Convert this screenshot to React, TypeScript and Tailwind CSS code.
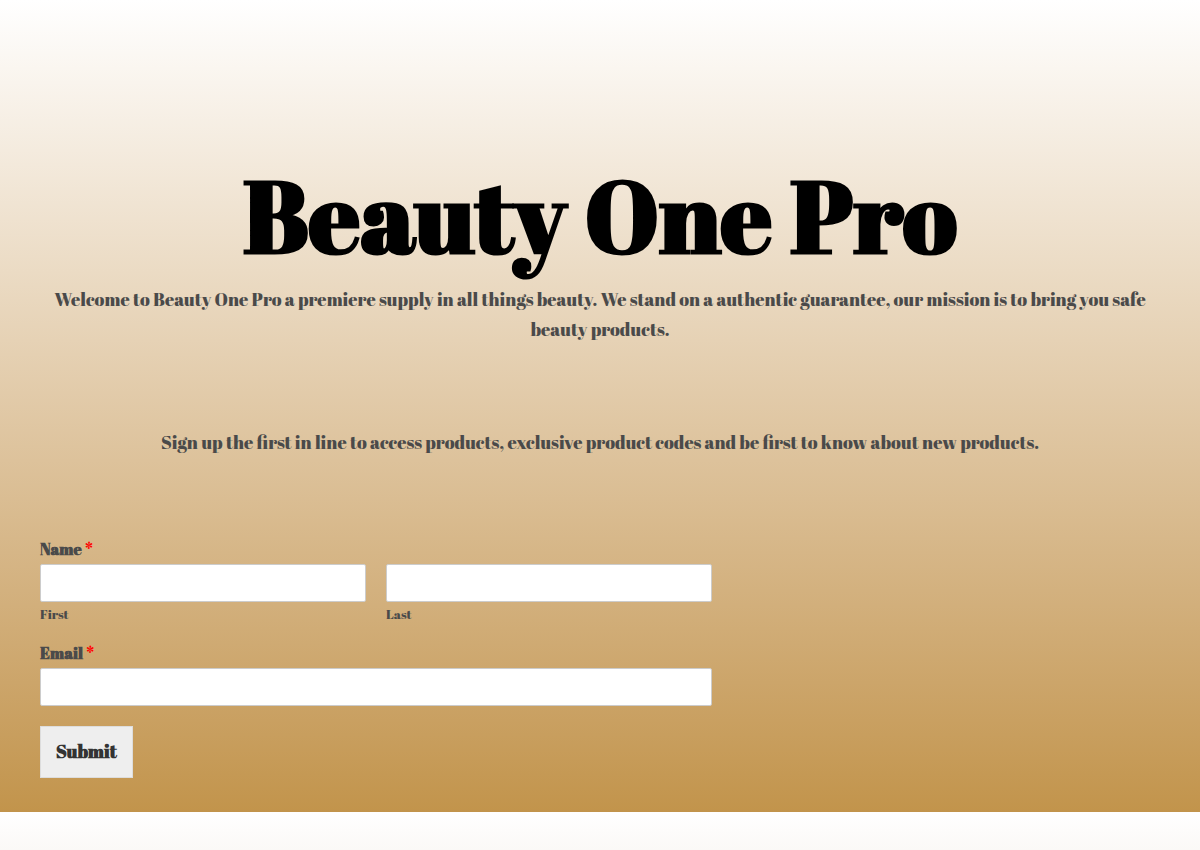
import { useId } from "react";
import type { ReactNode } from "react";

function FieldTitle({ children, htmlFor }: { children: ReactNode; htmlFor: string }) {
  return (
    <label htmlFor={htmlFor} className="mb-1 block text-base leading-[21px] font-bold">
      {children} <span className="font-normal text-[#ff0000]">*</span>
    </label>
  );
}

function TextBox({ id, type = "text" }: { id: string; type?: string }) {
  return (
    <input
      id={id}
      type={type}
      required
      className="block h-[38px] w-full rounded-xs border border-[#cccccc] bg-white px-2.5 text-base text-[#333333] shadow-none outline-none focus:border-[#999999]"
    />
  );
}

function SignUpForm() {
  const first = useId();
  const last = useId();
  const email = useId();
  return (
    <form className="mt-[82px] w-3/5 max-w-full" onSubmit={(e) => e.preventDefault()}>
      <FieldTitle htmlFor={first}>Name</FieldTitle>
      <div className="grid grid-cols-2 gap-5">
        <div>
          <TextBox id={first} />
          <label htmlFor={first} className="mt-1 block text-[13px] leading-[17px]">
            First
          </label>
        </div>
        <div>
          <TextBox id={last} />
          <label htmlFor={last} className="mt-1 block text-[13px] leading-[17px]">
            Last
          </label>
        </div>
      </div>
      <div className="mt-5">
        <FieldTitle htmlFor={email}>Email</FieldTitle>
        <TextBox id={email} type="email" />
      </div>
      <button
        type="submit"
        className="mt-5 h-[52px] cursor-pointer border border-[#dddddd] bg-[#eeeeee] px-[15px] pb-0.5 text-lg font-bold text-[#333333]"
      >
        Submit
      </button>
    </form>
  );
}

export default function App() {
  return (
    <div className="flex min-h-screen flex-col bg-white font-['Abril_Fatface','Liberation_Serif',serif] text-[#4a4a4a]">
      <main className="bg-linear-to-b from-white to-[#c2944b] px-10 pt-[155px] pb-[34px]">
        <h1 className="pb-[9px] text-center text-[100px] leading-[120px] font-bold text-black">
          Beauty One Pro
        </h1>
        <p className="text-center text-lg leading-[30px]">
          Welcome to Beauty One Pro a premiere supply in all things beauty. We stand on a authentic
          guarantee, our mission is to bring you safe beauty products.
        </p>
        <p className="mt-[83px] text-center text-lg leading-[30px]">
          Sign up the first in line to access products, exclusive product codes and be first to know
          about new products.
        </p>
        <SignUpForm />
      </main>
      <div className="grow bg-linear-to-b from-white to-[#fbf9f7]" />
    </div>
  );
}
